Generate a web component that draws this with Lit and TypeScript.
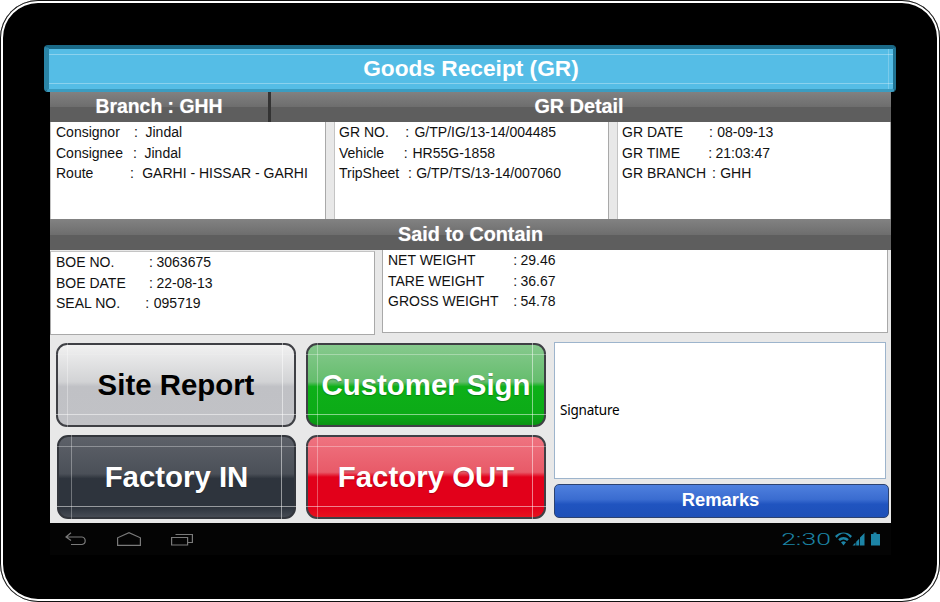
import { LitElement, html, css } from "lit";
import { customElement } from "lit/decorators.js";

type Field = [string, number, number, string];

const consignment: Field[] = [
  ["Consignor", 136, 146, "Jindal"],
  ["Consignee", 135, 145, "Jindal"],
  ["Route", 132, 142.7, "GARHI - HISSAR - GARHI"],
];
const grNumbers: Field[] = [
  ["GR NO.", 407.3, 415, "G/TP/IG/13-14/004485"],
  ["Vehicle", 405.7, 413, "HR55G-1858"],
  ["TripSheet", 410, 416.7, "G/TP/TS/13-14/007060"],
];
const grDates: Field[] = [
  ["GR DATE", 711, 717.7, "08-09-13"],
  ["GR TIME", 710.3, 716, "21:03:47"],
  ["GR BRANCH", 714, 720.7, "GHH"],
];
const boe: Field[] = [
  ["BOE NO.", 151, 157, "3063675"],
  ["BOE DATE", 151, 157, "22-08-13"],
  ["SEAL NO.", 147.3, 154.3, "095719"],
];
const weights: Field[] = [
  ["NET WEIGHT", 515.3, 521, "29.46"],
  ["TARE WEIGHT", 515.3, 521, "36.67"],
  ["GROSS WEIGHT", 515.3, 521, "54.78"],
];

@customElement("app-root")
export class AppRoot extends LitElement {
  static styles = css`
    :host { display: block; width: 940px; height: 602px; background: #fff; overflow: hidden; font-family: "Liberation Sans", Arial, sans-serif; }
    .device { box-sizing: border-box; width: 940px; height: 602px; background: #000; border-radius: 38px; padding-top: 45px; display: flex; flex-direction: column; box-shadow: inset 0 0 0 1px #111, inset 0 0 0 3px #fff; }
    .title { box-sizing: border-box; position: relative; margin-left: 44px; width: 852px; height: 47px; background: #55bde6; border-style: solid; border-width: 4px 3px 3px 5px; border-color: #1a6a88 #1f7393 #3b9cc0 #2a84a6; border-radius: 4px; color: #fff; font-weight: bold; font-size: 22.7px; display: flex; align-items: center; justify-content: center; padding-bottom: 2px; flex: none; }
    .title::before { content: ""; position: absolute; left: 0; right: 0; top: 5px; bottom: 5px; border-top: 1px solid rgba(255,255,255,.32); border-bottom: 1px solid rgba(255,255,255,.32); }
    .title::after { content: ""; position: absolute; right: 4px; top: 0; bottom: 0; border-right: 1px solid rgba(255,255,255,.22); }
    .screen { margin-left: 50px; width: 841px; background: #e8e8e8; display: flex; flex-direction: column; flex: none; margin-top: -1px; }
    .bar { height: 31px; background: linear-gradient(#828282, #6e6e6e 50%, #5e5e5e 51%, #5e5e5e); color: #fff; font-weight: bold; font-size: 19.8px; display: flex; align-items: center; justify-content: center; text-shadow: 0 0 1px rgba(255,255,255,.5); flex: none; }
    .bar-branch { width: 218px; height: 100%; display: flex; align-items: center; justify-content: center; border-right: 3px solid #333; flex: none; font-size: 19.4px; }
    .bar-detail { flex: 1; text-align: center; padding-right: 4px; }
    .row { display: flex; font-size: 14px; color: #111; line-height: 20.5px; flex: none; }
    .row-a { gap: 8px; height: 97px; }
    .panel { box-sizing: border-box; background: #fff; border: 1px solid #a9a9a9; border-top-color: #c4c4c4; padding: 0 5px; white-space: nowrap; }
    .row-a .panel { border-top: 0; border-left-color: #c4c4c4; border-bottom: 0; }
    .row-a .p2, .row-a .p3 { padding-left: 4px; }
    .p1 { width: 276px; } .p2 { width: 275px; } .p3 { width: 274px; }
    .row-b { height: 85px; gap: 7px; }
    .panel-b1 { width: 325px; height: 84px; margin-top: 1px; }
    .panel-b2 { width: 506px; height: 83px; border-top: 0; }
    .k, .c { display: inline-block; }
    .lower { height: 188px; display: flex; padding: 7px 0 0 6px; box-sizing: border-box; gap: 8px; }
    .btns { display: grid; grid-template-columns: 240px 240px; grid-template-rows: 84px 84px; gap: 8px 10px; margin-top: 1px; }
    .btn { box-sizing: border-box; position: relative; border: 2px solid #3f4045; border-radius: 11px; display: flex; align-items: center; justify-content: center; font-size: 29.4px; font-weight: bold; color: #fff; text-shadow: 0 1px 1px rgba(0,0,0,.25); }
    .btn::before { content: ""; position: absolute; left: -2px; right: -2px; top: 9px; bottom: 10px; border-top: 1px solid rgba(255,255,255,.32); border-bottom: 1px solid rgba(255,255,255,.5); }
    .btn::after { content: ""; position: absolute; top: -2px; bottom: -2px; left: 9px; right: 11px; border-left: 1px solid rgba(255,255,255,.32); border-right: 1px solid rgba(255,255,255,.5); }
    .site { color: #000; text-shadow: none; background: linear-gradient(#f1f1f1, #d2d3d5 46%, #c0c1c5 52%, #c1c2c6); }
    .site::before { border-top-color: rgba(255,255,255,.1); }
    .cust { background: linear-gradient(#86c98d, #65bd6d 46%, #0db018 52%, #0cab17 86%, #0a9313); }
    .fin { background: linear-gradient(#5d6169, #4b5058 46%, #2e343d 52%, #2e343d 88%, #464b54); border-color: #33363c; margin-left: 1px; }
    .fin::after { left: 12px; right: 12px; }
    .fout { background: linear-gradient(#ef7380, #e85a68 44%, #e2001a 50%, #e2001a 88%, #e6131f); }
    .side { display: flex; flex-direction: column; width: 335px; gap: 5px; }
    .sig { box-sizing: border-box; width: 332px; height: 137px; background: #fff; border: 1px solid #9db4cc; font-family: "Noto Sans", sans-serif; font-size: 13.5px; letter-spacing: -.2px; color: #000; padding: 0 0 2px 5px; display: flex; align-items: center; }
    .remarks { box-sizing: border-box; height: 34px; border: 1px solid #2c4270; border-radius: 5px; background: linear-gradient(#4f80de, #3a6cd0 45%, #2054c0 60%, #1e50b8); color: #fff; font-size: 18.4px; font-weight: bold; display: flex; align-items: center; justify-content: center; padding: 0 2px 2px 0; }
    .nav { margin-left: 50px; width: 841px; height: 32px; background: #040404; display: flex; align-items: center; box-sizing: border-box; padding: 0 11px 0 15px; flex: none; }
    .nav svg { display: block; flex: none; }
    .navicons { display: flex; gap: 28px; align-items: center; }
    .recents { margin-left: 2px; }
    .status { margin-left: auto; display: flex; align-items: center; gap: 4px; color: #1c84a6; }
    .time { font-family: Roboto, sans-serif; font-weight: 300; font-size: 17px; transform: scaleX(1.56); transform-origin: right; line-height: 14px; }
  `;

  private lines(rows: Field[], left: number) {
    return rows.map(([label, colon, value, text]) => {
      const colonBox = colon - 2;
      const valueBox = value - 0.5;
      return html`<div><span class="k" style="width:${colonBox - left}px">${label}</span><span class="c" style="width:${valueBox - colonBox}px">:</span><span>${text}</span></div>`;
    });
  }

  render() {
    return html`<div class="device">
      <div class="title">Goods Receipt (GR)</div>
      <div class="screen">
        <div class="bar">
          <div class="bar-branch">Branch : GHH</div>
          <div class="bar-detail">GR Detail</div>
        </div>
        <div class="row row-a">
          <div class="panel p1">${this.lines(consignment, 56)}</div>
          <div class="panel p2">${this.lines(grNumbers, 339)}</div>
          <div class="panel p3">${this.lines(grDates, 622)}</div>
        </div>
        <div class="bar">Said to Contain</div>
        <div class="row row-b">
          <div class="panel panel-b1">${this.lines(boe, 56)}</div>
          <div class="panel panel-b2">${this.lines(weights, 388)}</div>
        </div>
        <div class="lower">
          <div class="btns">
            <div class="btn site">Site Report</div>
            <div class="btn cust">Customer Sign</div>
            <div class="btn fin">Factory IN</div>
            <div class="btn fout">Factory OUT</div>
          </div>
          <div class="side">
            <div class="sig">Signature</div>
            <div class="remarks">Remarks</div>
          </div>
        </div>
      </div>
      <div class="nav">
        <div class="navicons">
          <svg width="24" height="14" viewBox="0 0 24 14" fill="none" stroke="#7a7a7a" stroke-width="1.2"><path d="M1 5h16a3.800 3.800 0 0 1 0 7.500H6M6 .8 1 5l5 3.500"/></svg>
          <svg width="24" height="14" viewBox="0 0 24 14" fill="none" stroke="#7a7a7a" stroke-width="1.2"><path d="M.6 13.300V5.800L12 .7l11.400 5.100v7.500z"/></svg>
          <svg class="recents" width="22" height="14" viewBox="0 0 22 14" fill="none" stroke="#7a7a7a" stroke-width="1.2"><path d="M.6 5.500h16v7.500H.6zM4.500 2.500H21.400v8h-4.500"/></svg>
        </div>
        <div class="status">
          <span class="time">2:30</span>
          <svg width="45" height="14" viewBox="0 0 45 14" fill="#1c84a6">
            <path d="M0 4C4.800-.6 12.200-.6 17 4l-1.700 1.900C11-.1 6-.1 1.700 5.900zM3.200 7.200c3.300-3 7.300-3 10.600 0l-1.700 1.900c-2.400-2-4.800-2-7.200 0zM6 10.200c1.800-1.400 3.200-1.400 5 0L8.500 13.500z"/>
            <path d="M17.500 13.500h3V10.500zM21.200 13.500h3V6.800l-3 3zM25 13.500h4.500V1L25 5.500z"/>
            <path d="M36 2h2.500V.5h3V2H45v11.500h-9z"/>
          </svg>
        </div>
      </div>
    </div>`;
  }
}
